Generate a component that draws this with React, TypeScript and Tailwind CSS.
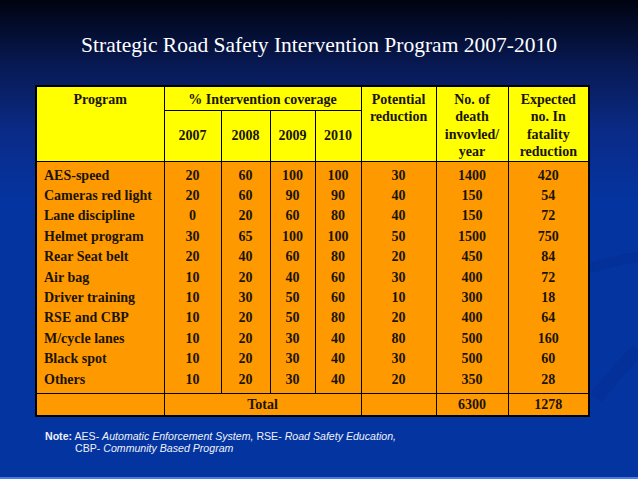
import React from "react";

const rows: string[][] = [
  ["AES-speed", "20", "60", "100", "100", "30", "1400", "420"],
  ["Cameras red light", "20", "60", "90", "90", "40", "150", "54"],
  ["Lane discipline", "0", "20", "60", "80", "40", "150", "72"],
  ["Helmet program", "30", "65", "100", "100", "50", "1500", "750"],
  ["Rear Seat belt", "20", "40", "60", "80", "20", "450", "84"],
  ["Air bag", "10", "20", "40", "60", "30", "400", "72"],
  ["Driver training", "10", "30", "50", "60", "10", "300", "18"],
  ["RSE and CBP", "10", "20", "50", "80", "20", "400", "64"],
  ["M/cycle lanes", "10", "20", "30", "40", "80", "500", "160"],
  ["Black spot", "10", "20", "30", "40", "30", "500", "60"],
  ["Others", "10", "20", "30", "40", "20", "350", "28"],
];

export default function App() {
  return (
    <div className="relative w-[638px] h-[479px] overflow-hidden border-b-2 border-[#4a7be0] bg-[linear-gradient(180deg,#000310_0%,#081a55_14%,#0a2b88_28%,#0434a0_42%,#0334a0_100%)] font-['Liberation_Serif','Times_New_Roman',serif]">
      <svg
        className="absolute inset-0 pointer-events-none"
        width={638}
        height={479}
        viewBox="0 0 638 479"
      >
        <path
          d="M590 268 C 610 262, 630 258, 638 257"
          stroke="#022c8c"
          strokeWidth={10}
          fill="none"
          opacity={0.35}
        />
        <path
          d="M596 398 C 610 380, 628 360, 638 350"
          stroke="#022c8c"
          strokeWidth={14}
          fill="none"
          opacity={0.3}
        />
      </svg>
      <div className="relative flex flex-col">
        <h1 className="pt-[32px] text-center text-white text-[21.5px] leading-[26px] font-normal">
          Strategic Road Safety Intervention Program 2007-2010
        </h1>
        <table className="ml-[35px] mt-[27px] w-[553px] table-fixed border-collapse border-2 border-black text-[14px] font-bold text-[#1a1405]">
          <colgroup>
            <col className="w-[128px]" />
            <col className="w-[57px]" />
            <col className="w-[49px]" />
            <col className="w-[45px]" />
            <col className="w-[46px]" />
            <col className="w-[75px]" />
            <col className="w-[72px]" />
            <col className="w-[81px]" />
          </colgroup>
          <thead className="bg-[#ffff00]">
            <tr className="h-[24px]">
              <th rowSpan={2} className="border border-black align-top pt-[4px] leading-[17.3px] font-bold">
                Program
              </th>
              <th colSpan={4} className="border border-black align-top pt-[4px] leading-[17.3px] font-bold">
                % Intervention coverage
              </th>
              <th rowSpan={2} className="border border-black align-top pt-[4px] leading-[17.3px] font-bold">
                Potential
                <br />
                reduction
              </th>
              <th rowSpan={2} className="border border-black align-top pt-[4px] leading-[17.3px] font-bold">
                No. of
                <br />
                death
                <br />
                invovled/
                <br />
                year
              </th>
              <th rowSpan={2} className="border border-black align-top pt-[4px] leading-[17.3px] font-bold">
                Expected
                <br />
                no. In
                <br />
                fatality
                <br />
                reduction
              </th>
            </tr>
            <tr className="h-[51px]">
              {["2007", "2008", "2009", "2010"].map((y) => (
                <th key={y} className="border border-black align-middle leading-[17.3px] font-bold">
                  {y}
                </th>
              ))}
            </tr>
          </thead>
          <tbody className="bg-[#ff9900]">
            {rows.map((r, i) => {
              const pad =
                i === 0 ? "pt-[4px]" : i === rows.length - 1 ? "pb-[3px]" : "";
              return (
                <tr key={r[0]}>
                  {r.map((c, j) => (
                    <td
                      key={j}
                      className={`border-x border-black p-0 leading-[20.4px] whitespace-nowrap ${pad} ${
                        j === 0 ? "text-left pl-[7px]" : "text-center"
                      }`}
                    >
                      {c}
                    </td>
                  ))}
                </tr>
              );
            })}
            <tr className="h-[23px]">
              <td className="border border-black" />
              <td colSpan={4} className="border border-black text-center leading-[20px]">
                Total
              </td>
              <td className="border border-black" />
              <td className="border border-black text-center leading-[20px]">6300</td>
              <td className="border border-black text-center leading-[20px]">1278</td>
            </tr>
          </tbody>
        </table>
        <div className="mt-[13px] ml-[45px] font-['Liberation_Sans',Arial,sans-serif] text-[10.6px] leading-[12px] text-[#eef2fb]">
          <div>
            <span className="font-bold">Note:</span> AES- <i>Automatic Enforcement System,</i> RSE-{" "}
            <i>Road Safety Education,</i>
          </div>
          <div className="pl-[30px]">
            CBP- <i>Community Based Program</i>
          </div>
        </div>
      </div>
    </div>
  );
}
